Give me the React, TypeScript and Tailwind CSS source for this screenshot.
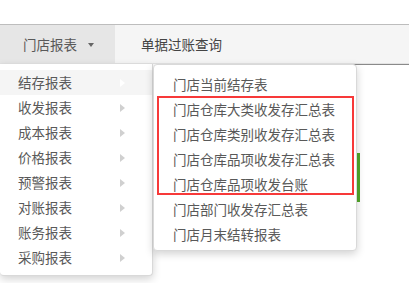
import React from "react";

const font = { fontFamily: '"Noto Sans CJK SC", "Noto Sans", sans-serif' };

const left = ["结存报表", "收发报表", "成本报表", "价格报表", "预警报表", "对账报表", "账务报表", "采购报表"];
const sub = [
  "门店当前结存表",
  "门店仓库大类收发存汇总表",
  "门店仓库类别收发存汇总表",
  "门店仓库品项收发存汇总表",
  "门店仓库品项收发台账",
  "门店部门收发存汇总表",
  "门店月末结转报表",
];

export default function App() {
  return (
    <div className="relative w-[409px] h-[283px] overflow-hidden bg-white text-[13.5px] text-[#595959]" style={font}>
      <div className="h-[24px]" />
      <div className="h-px bg-[#bdbdbd]" />
      <div className="flex h-[39px] bg-[#f5f5f5] border-b border-[#e3e3e3]">
        <div className="flex items-center w-[115px] bg-[#e6e6e6] pl-[23px]">
          <span>门店报表</span>
          <span className="ml-[11px] mt-[2px] w-0 h-0 border-t-[4px] border-t-[#666] border-x-[3.5px] border-x-transparent" />
        </div>
        <div className="flex items-center pl-[26px] text-[#444]">单据过账查询</div>
      </div>
      <div className="h-px bg-[#8a8a8a] ml-[300px]" />
      <div className="absolute left-[356px] top-[153px] w-[4px] h-[49px] bg-[#52a82a]" />

      <div className="absolute left-0 top-[64px] w-[153px] h-[212px] bg-white rounded-b-[4px] border border-[#d9d9d9] border-t-0 border-l-0 shadow-[0_3px_8px_rgba(0,0,0,0.18)] py-[6px]">
        {left.map((t, i) => (
          <div key={t} className={`flex items-center h-[25px] pl-[18px] ${i === 0 ? "bg-[#f5f5f5]" : ""}`}>
            <span className="w-[102px]">{t}</span>
            <span className={`w-0 h-0 border-l-[5px] border-y-[4px] border-y-transparent ${i === 0 ? "border-l-white" : "border-l-[#d0d0d0]"}`} />
          </div>
        ))}
      </div>

      <div className="absolute left-[153px] top-[64px] w-[204px] h-[187px] bg-white rounded-[4px] border border-[#d9d9d9] shadow-[0_3px_8px_rgba(0,0,0,0.18)] pt-[7px]">
        {sub.map((t) => (
          <div key={t} className="flex items-center h-[25px] pl-[19px] whitespace-nowrap">
            {t}
          </div>
        ))}
      </div>

      <div className="absolute left-[157px] top-[96px] w-[197px] h-[99px] border-2 border-[#f73939]" />
    </div>
  );
}
